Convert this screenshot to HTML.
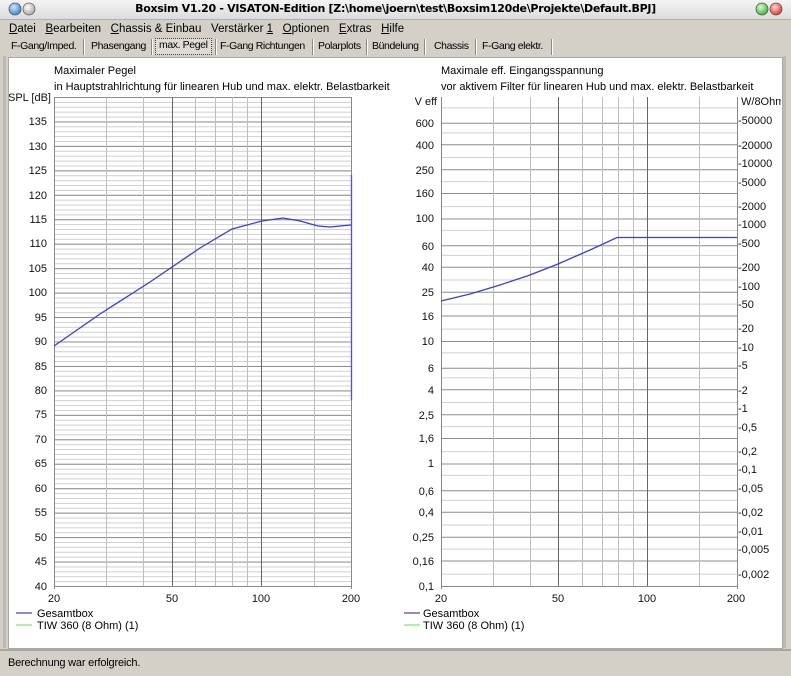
<!DOCTYPE html>
<html><head><meta charset="utf-8"><style>
body{margin:0;width:791px;height:676px;background:#d4d0c8;font-family:"Liberation Sans",sans-serif;font-size:11px;overflow:hidden;position:relative}
.t{position:absolute;white-space:nowrap}
.tab span{letter-spacing:-0.4px}
</style></head><body>
<div style="position:absolute;left:0;top:0;width:791px;height:19px;background:linear-gradient(#f4f4f4,#dcdcdc);border-bottom:1px solid #b0b0b0"></div>
<svg style="position:absolute;left:0;top:0" width="791" height="20">
<defs><radialGradient id="b" cx=".4" cy=".35" r=".7"><stop offset="0" stop-color="#cfe8ff"/><stop offset="1" stop-color="#2f7fd0"/></radialGradient>
<radialGradient id="g" cx=".4" cy=".35" r=".7"><stop offset="0" stop-color="#fff"/><stop offset="1" stop-color="#a0a0a0"/></radialGradient>
<radialGradient id="gr" cx=".4" cy=".35" r=".7"><stop offset="0" stop-color="#d8ffd0"/><stop offset="1" stop-color="#30b030"/></radialGradient>
<radialGradient id="r" cx=".4" cy=".35" r=".7"><stop offset="0" stop-color="#ffd8d0"/><stop offset="1" stop-color="#e03020"/></radialGradient></defs>
<circle cx="15" cy="9" r="6" fill="url(#b)" stroke="#555" stroke-width=".8"/>
<circle cx="29" cy="9" r="6" fill="url(#g)" stroke="#666" stroke-width=".8"/>
<circle cx="762" cy="9" r="6" fill="url(#gr)" stroke="#555" stroke-width=".8"/>
<circle cx="776" cy="9" r="6" fill="url(#r)" stroke="#555" stroke-width=".8"/>
</svg>
<div class="t" style="left:0;width:791px;text-align:center;top:2px;font-weight:bold;font-family:'DejaVu Sans',sans-serif;font-size:11px;letter-spacing:-0.3px">Boxsim V1.20 - VISATON-Edition [Z:\home\joern\test\Boxsim120de\Projekte\Default.BPJ]</div>
<div class="t" style="left:9px;top:23px;font-size:11.5px">
<u>D</u>atei&nbsp;&nbsp; <u>B</u>earbeiten&nbsp;&nbsp; <u>C</u>hassis &amp; Einbau&nbsp;&nbsp; Verstärker <u>1</u>&nbsp;&nbsp; <u>O</u>ptionen&nbsp;&nbsp; <u>E</u>xtras&nbsp;&nbsp; <u>H</u>ilfe</div>
<div class="tab" style="position:absolute;left:8px;top:38px;width:546px;height:18px;font-size:10.5px">
<span class="t" style="left:3px;top:2px">F-Gang/Imped.</span><span class="t" style="left:75px;top:1px;height:16px;border-left:1px solid #888;border-right:1px solid #fff"></span>
<span class="t" style="left:83px;top:2px">Phasengang</span><span class="t" style="left:143px;top:1px;height:16px;border-left:1px solid #888;border-right:1px solid #fff"></span>
<span class="t" style="left:147px;top:0px;height:15px;padding:0 3px;border:1px dotted #444;background:#dedbd5">max. Pegel</span><span class="t" style="left:207px;top:1px;height:16px;border-left:1px solid #888;border-right:1px solid #fff"></span>
<span class="t" style="left:212px;top:2px">F-Gang Richtungen</span><span class="t" style="left:304px;top:1px;height:16px;border-left:1px solid #888;border-right:1px solid #fff"></span>
<span class="t" style="left:310px;top:2px">Polarplots</span><span class="t" style="left:358px;top:1px;height:16px;border-left:1px solid #888;border-right:1px solid #fff"></span>
<span class="t" style="left:364px;top:2px">Bündelung</span><span class="t" style="left:416px;top:1px;height:16px;border-left:1px solid #888;border-right:1px solid #fff"></span>
<span class="t" style="left:426px;top:2px">Chassis</span><span class="t" style="left:467px;top:1px;height:16px;border-left:1px solid #888;border-right:1px solid #fff"></span>
<span class="t" style="left:474px;top:2px">F-Gang elektr.</span><span class="t" style="left:543px;top:1px;height:16px;border-left:1px solid #888;border-right:1px solid #fff"></span>
</div>
<div style="position:absolute;left:3px;top:56px;width:3px;height:592px;background:#bdbab3"></div>
<div style="position:absolute;left:783px;top:56px;width:3px;height:592px;background:#bdbab3"></div>
<div style="position:absolute;left:8px;top:57px;width:773px;height:590px;background:#fff;border:1px solid #aaa;overflow:hidden"></div>
<div style="position:absolute;left:0;top:649px;width:791px;height:2px;background:#a9a6a0"></div>
<div class="t" style="left:8px;top:657px;letter-spacing:-0.2px">Berechnung war erfolgreich.</div>
<svg style="position:absolute;left:0;top:0" width="791" height="676" font-family="Liberation Sans, sans-serif" font-size="11">
<defs>
<clipPath id="cp"><rect x="9" y="58" width="772" height="589"/></clipPath>
<pattern id="p1" width="300" height="4.89" patternUnits="userSpaceOnUse" x="0" y="586"><line x1="0" y1="0.5" x2="300" y2="0.5" stroke="#cfcfcf"/></pattern>
<pattern id="p5" width="300" height="24.45" patternUnits="userSpaceOnUse" x="0" y="586"><line x1="0" y1="0.5" x2="300" y2="0.5" stroke="#8c8c8c"/></pattern>
<pattern id="pr" width="300" height="122.5" patternUnits="userSpaceOnUse" x="0" y="96">
<g stroke="#cfcfcf"><line x1="0" x2="300" y1="110.6" y2="110.6"/><line x1="0" x2="300" y1="85.6" y2="85.6"/><line x1="0" x2="300" y1="61.5" y2="61.5"/><line x1="0" x2="300" y1="36.9" y2="36.9"/><line x1="0" x2="300" y1="11.9" y2="11.9"/></g>
<g stroke="#8c8c8c"><line x1="0" x2="300" y1="0.5" y2="0.5"/><line x1="0" x2="300" y1="97.5" y2="97.5"/><line x1="0" x2="300" y1="73.7" y2="73.7"/><line x1="0" x2="300" y1="48.8" y2="48.8"/><line x1="0" x2="300" y1="27.2" y2="27.2"/></g>
</pattern>
</defs>
<g clip-path="url(#cp)">
<text x="54" y="74">Maximaler Pegel</text>
<text x="54" y="90">in Hauptstrahlrichtung für linearen Hub und max. elektr. Belastbarkeit</text>
<text x="441" y="74">Maximale eff. Eingangsspannung</text>
<text x="441" y="90">vor aktivem Filter für linearen Hub und max. elektr. Belastbarkeit</text>
<rect x="54" y="97" width="297" height="489" fill="url(#p1)"/>
<rect x="54" y="97" width="297" height="489" fill="url(#p5)"/>
<g stroke="#bdbdbd"><line x1="106.5" y1="97" x2="106.5" y2="586"/><line x1="143.5" y1="97" x2="143.5" y2="586"/><line x1="195.5" y1="97" x2="195.5" y2="586"/><line x1="215.5" y1="97" x2="215.5" y2="586"/><line x1="232.5" y1="97" x2="232.5" y2="586"/><line x1="247.5" y1="97" x2="247.5" y2="586"/><line x1="314.5" y1="97" x2="314.5" y2="586"/></g>
<g stroke="#666"><line x1="172.5" y1="97" x2="172.5" y2="586"/><line x1="261.5" y1="97" x2="261.5" y2="586"/></g>
<g stroke="#888"><line x1="54.5" y1="97" x2="54.5" y2="589"/><line x1="351.5" y1="97" x2="351.5" y2="589"/><line x1="54" y1="586.5" x2="352" y2="586.5"/></g>
<g fill="#111" text-anchor="end">
<text x="51" y="101">SPL [dB]</text>
<text x="47" y="125">135</text><text x="47" y="150">130</text><text x="47" y="174">125</text><text x="47" y="199">120</text><text x="47" y="223">115</text><text x="47" y="247">110</text><text x="47" y="272">105</text><text x="47" y="296">100</text><text x="47" y="321">95</text><text x="47" y="345">90</text><text x="47" y="370">85</text><text x="47" y="394">80</text><text x="47" y="418">75</text><text x="47" y="443">70</text><text x="47" y="467">65</text><text x="47" y="492">60</text><text x="47" y="516">55</text><text x="47" y="541">50</text><text x="47" y="565">45</text><text x="47" y="590">40</text>
</g>
<g fill="#111" text-anchor="middle"><text x="54" y="602">20</text><text x="172" y="602">50</text><text x="261" y="602">100</text><text x="351" y="602">200</text></g>
<polyline fill="none" stroke="#3a3ae8" stroke-width="1.3" points="54,346 100,314 150,282 200,248 232,229 262,221 283,218 300,221 318,226 330,227 351,225"/>
<line x1="351.5" y1="175" x2="351.5" y2="400" stroke="#4a4aff" stroke-width="1.3"/>
<line x1="16" y1="613" x2="32" y2="613" stroke="#1a1aa0"/><text x="37" y="617">Gesamtbox</text>
<line x1="16" y1="625" x2="32" y2="625" stroke="#5ae05a"/><text x="37" y="629">TIW 360 (8 Ohm) (1)</text>

<rect x="441" y="97" width="296" height="489" fill="url(#pr)"/>
<g stroke="#bdbdbd"><line x1="493.5" y1="97" x2="493.5" y2="586"/><line x1="530.5" y1="97" x2="530.5" y2="586"/><line x1="582.5" y1="97" x2="582.5" y2="586"/><line x1="602.5" y1="97" x2="602.5" y2="586"/><line x1="618.5" y1="97" x2="618.5" y2="586"/><line x1="633.5" y1="97" x2="633.5" y2="586"/><line x1="699.5" y1="97" x2="699.5" y2="586"/></g>
<g stroke="#666"><line x1="558.5" y1="97" x2="558.5" y2="586"/><line x1="647.5" y1="97" x2="647.5" y2="586"/></g>
<g stroke="#888"><line x1="441.5" y1="97" x2="441.5" y2="589"/><line x1="737.5" y1="97" x2="737.5" y2="589"/><line x1="441" y1="586.5" x2="738" y2="586.5"/></g>
<g fill="#111" text-anchor="end">
<text x="437" y="105">V eff</text>
<text x="434" y="127">600</text><text x="434" y="149">400</text><text x="434" y="174">250</text><text x="434" y="197">160</text><text x="434" y="222">100</text><text x="434" y="250">60</text><text x="434" y="271">40</text><text x="434" y="296">25</text><text x="434" y="320">16</text><text x="434" y="345">10</text><text x="434" y="372">6</text><text x="434" y="394">4</text><text x="434" y="419">2,5</text><text x="434" y="442">1,6</text><text x="434" y="467">1</text><text x="434" y="495">0,6</text><text x="434" y="516">0,4</text><text x="434" y="541">0,25</text><text x="434" y="565">0,16</text><text x="434" y="590">0,1</text>
</g>
<g fill="#111">
<text x="741" y="105">W/8Ohm</text>
<text x="738" y="124">-50000</text><text x="738" y="149">-20000</text><text x="738" y="167">-10000</text><text x="738" y="186">-5000</text><text x="738" y="210">-2000</text><text x="738" y="228">-1000</text><text x="738" y="247">-500</text><text x="738" y="271">-200</text><text x="738" y="290">-100</text><text x="738" y="308">-50</text><text x="738" y="332">-20</text><text x="738" y="351">-10</text><text x="738" y="369">-5</text><text x="738" y="394">-2</text><text x="738" y="412">-1</text><text x="738" y="431">-0,5</text><text x="738" y="455">-0,2</text><text x="738" y="473">-0,1</text><text x="738" y="492">-0,05</text><text x="738" y="516">-0,02</text><text x="738" y="535">-0,01</text><text x="738" y="553">-0,005</text><text x="738" y="578">-0,002</text>
</g>
<g fill="#111" text-anchor="middle"><text x="441" y="602">20</text><text x="558" y="602">50</text><text x="647" y="602">100</text><text x="736" y="602">200</text></g>
<polyline fill="none" stroke="#3a3ae8" stroke-width="1.3" points="441,301 470,294 500,285 530,275 558,264 590,250 617,237.5 737,237.5"/>
<line x1="404" y1="613" x2="420" y2="613" stroke="#1a1aa0"/><text x="423" y="617">Gesamtbox</text>
<line x1="404" y1="625" x2="420" y2="625" stroke="#5ae05a"/><text x="423" y="629">TIW 360 (8 Ohm) (1)</text>
</g>
</svg>
</body></html>
